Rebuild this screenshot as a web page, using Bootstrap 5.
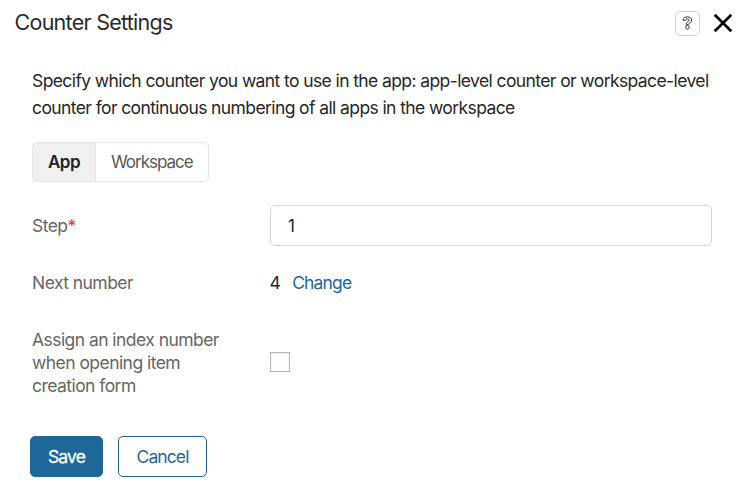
<!DOCTYPE html>
<html lang="en">
<head>
<meta charset="utf-8">
<meta name="viewport" content="width=device-width, initial-scale=1">
<title>Counter Settings</title>
<link href="https://cdn.jsdelivr.net/npm/bootstrap@5.3.0/dist/css/bootstrap.min.css" rel="stylesheet">
<style>
body{font-family:Inter,"Liberation Sans",sans-serif;font-size:17.5px;line-height:23px;letter-spacing:-.6px;color:#24272b;background:#fff}
.dialog-head{height:46px;padding:0 4px 0 14.5px}
.dialog-title{font-size:21.5px;line-height:28px;letter-spacing:-.73px;font-weight:400;color:#2b2b2b;padding-bottom:2px}
.help-btn{width:25px;height:25px;border:1px solid #d3d3d3;border-radius:5px;background:#fff}
.dialog-main{padding:21px 26px 0 32px}
.intro{line-height:27px;margin-bottom:21px;letter-spacing:-.6px}
.scope .btn{height:40px;padding:0 15px;font-size:17px;letter-spacing:-1px;line-height:38px;color:#595959;border:1px solid #e5e5e5;border-radius:5px;background:#fff}
.scope .btn.active{background:#f0f0f0;color:#222;font-weight:600;border-color:#e5e5e5;letter-spacing:-.55px}
.step-row{margin-top:23px}
.next-row{margin-top:25px}
.index-row{margin-top:34px}
.field-label{width:238px;padding-right:30px;color:#666;letter-spacing:-.55px}
.step-row .field-label{padding-bottom:1px}
.req{color:#e8382f}
.step-input{height:41px;border:1px solid #d6d6d6;border-radius:5px;padding:0 17px;font-size:17px;color:#24272b}
.change-link{color:#1e6799;margin-left:12px;letter-spacing:-.85px}
.next-value{margin-left:-.6px}
.form-check-input.index-check{width:20px;height:20px;border:1px solid #b5b5b5;border-radius:0;box-shadow:inset 0 1px 2px #e6e6e6;margin:-2px 0 0}
.dialog-foot{padding:39px 0 0 30px;gap:15px}
.dialog-foot .btn{height:41px;border:1px solid #1e6799;border-radius:5px;font-size:17.5px;letter-spacing:-.9px;padding:0;line-height:39px}
.btn-save{width:73px;background:#1e6799;color:#fff;-webkit-text-stroke:.3px #fff}
.btn-cancel{width:89px;color:#1e6799;background:#fff}
</style>
</head>
<body>
<header class="dialog-head d-flex align-items-center justify-content-between">
  <h1 class="dialog-title mb-0">Counter Settings</h1>
  <div class="d-flex align-items-center">
    <button class="help-btn p-0 d-flex align-items-center justify-content-center" type="button" aria-label="Help">
      <svg width="11" height="15" viewBox="0 0 11 15" fill="none" stroke="#333" stroke-width="1"><path d="M1 4.2C1.1 2 2.8.9 5.3.9c2.7 0 4.4 1.2 4.4 3.2 0 1.5-.9 2.2-2 2.9-.9.5-1.1.9-1.1 1.7H4.2c0-1.7.5-2.4 1.7-3.1.8-.5 1.2-.8 1.2-1.4 0-.8-.7-1.2-1.7-1.2-1.2 0-1.8.5-1.9 1.5z"/><circle cx="5.4" cy="11.4" r="1.8"/></svg>
    </button>
    <button class="border-0 bg-transparent p-0 d-flex ms-2 ps-1" type="button" aria-label="Close">
      <svg width="22" height="22" viewBox="0 0 22 22" stroke="#000" stroke-width="2.7"><path d="M2.7 2.7 19.3 19.3M19.3 2.7 2.7 19.3"/></svg>
    </button>
  </div>
</header>
<main class="dialog-main">
  <p class="intro">Specify which counter you want to use in the app: app-level counter or workspace-level<br>counter for continuous numbering of all apps in the workspace</p>
  <div class="btn-group scope" role="group">
    <button class="btn active" type="button">App</button>
    <button class="btn" type="button">Workspace</button>
  </div>
  <div class="d-flex align-items-center step-row">
    <label class="field-label flex-shrink-0" for="step">Step<span class="req">*</span></label>
    <input id="step" class="form-control step-input" value="1">
  </div>
  <div class="d-flex next-row">
    <div class="field-label flex-shrink-0">Next number</div>
    <div class="next-value">4<a class="change-link text-decoration-none" href="#">Change</a></div>
  </div>
  <div class="d-flex align-items-center index-row">
    <label class="field-label flex-shrink-0" for="idx">Assign an index number when opening item creation form</label>
    <input id="idx" type="checkbox" class="form-check-input index-check">
  </div>
</main>
<footer class="dialog-foot d-flex">
  <button class="btn btn-save" type="button">Save</button>
  <button class="btn btn-cancel" type="button">Cancel</button>
</footer>
<script src="https://cdn.jsdelivr.net/npm/bootstrap@5.3.0/dist/js/bootstrap.bundle.min.js"></script>
</body>
</html>
